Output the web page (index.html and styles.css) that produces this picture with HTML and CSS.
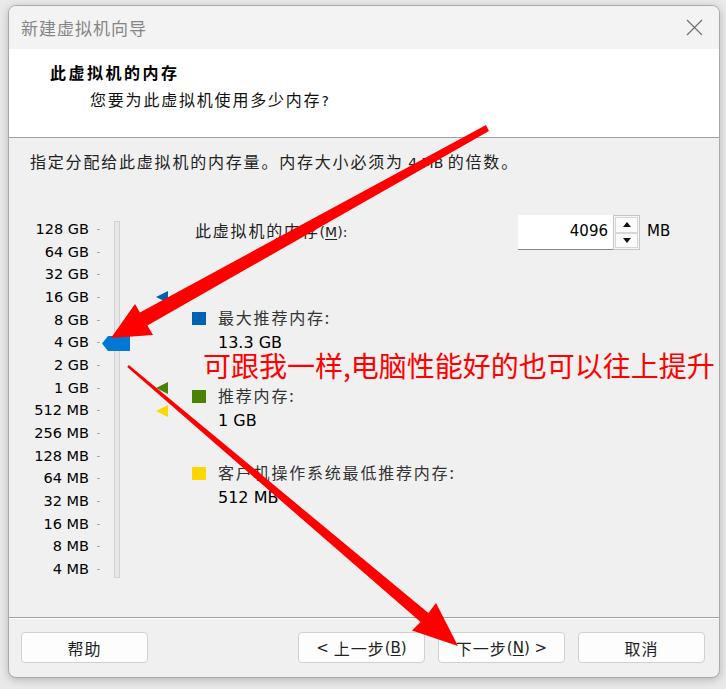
FILE: index.html
```html
<html>

<head>
  <meta charset="utf-8">
  <link rel="stylesheet" href="styles.css">
</head>

<body>
  <div class="win">
    <div class="titlebar">
      <span class="title">新建虚拟机向导</span>
      <svg class="close" width="17" height="17" viewBox="0 0 17 17">
        <path d="M1 1L16 16M16 1L1 16" stroke="#6e6e6e" stroke-width="1.2" fill="none" />
      </svg>
    </div>
    <div class="header">
      <div class="head-title">此虚拟机的内存</div>
      <div class="head-sub"><span class="cn">您要为此虚拟机使用多少内存</span>?</div>
    </div>
    <div class="content">
      <p class="desc"><span class="cn">指定分配给此虚拟机的内存量。内存大小必须为</span> 4 MB <span class="cn">的倍数。</span></p>
      <div class="mem">
        <div class="scale">
          <div class="labels">
            <div>128 GB</div><div>64 GB</div><div>32 GB</div><div>16 GB</div>
            <div>8 GB</div><div>4 GB</div><div>2 GB</div><div>1 GB</div>
            <div>512 MB</div><div>256 MB</div><div>128 MB</div><div>64 MB</div>
            <div>32 MB</div><div>16 MB</div><div>8 MB</div><div>4 MB</div>
          </div>
          <div class="ticks">
            <i></i><i></i><i></i><i></i><i></i><i></i><i></i><i></i>
            <i></i><i></i><i></i><i></i><i></i><i></i><i></i><i></i>
          </div>
          <div class="track"></div>
          <div class="marks">
            <i></i><i></i><i></i><i class="max"></i><i></i><i></i><i></i><i class="rec"></i>
            <i class="min"></i><i></i><i></i><i></i><i></i><i></i><i></i><i></i>
          </div>
          <div class="thumb"></div>
        </div>
        <div class="panel">
          <div class="mem-row">
            <span class="mem-label"><span class="cn">此虚拟机的内存</span>(<u>M</u>):</span>
            <div class="spin">
              <div class="spin-val">4096</div>
              <div class="spin-btns">
                <b><em class="up"></em></b>
                <b><em class="down"></em></b>
              </div>
            </div>
            <span class="unit">MB</span>
          </div>
          <div class="legend">
            <div class="item">
              <span class="sq max"></span>
              <div>
                <div class="cn lbl">最大推荐内存:</div>
                <div class="val">13.3 GB</div>
              </div>
            </div>
            <div class="item">
              <span class="sq rec"></span>
              <div>
                <div class="cn lbl">推荐内存:</div>
                <div class="val">1 GB</div>
              </div>
            </div>
            <div class="item last">
              <span class="sq min"></span>
              <div>
                <div class="cn lbl">客户机操作系统最低推荐内存:</div>
                <div class="val">512 MB</div>
              </div>
            </div>
          </div>
        </div>
      </div>
    </div>
    <div class="footer">
      <a class="btn"><span class="cn">帮助</span></a>
      <a class="btn push">&lt;&nbsp;<span class="cn">上一步</span>(<u>B</u>)</a>
      <a class="btn"><span class="cn">下一步</span>(<u>N</u>)&nbsp;&gt;</a>
      <a class="btn"><span class="cn">取消</span></a>
    </div>
  </div>

  <div class="note">可跟我一样,电脑性能好的也可以往上提升</div>

  <svg class="arrows" width="726" height="689" viewBox="0 0 726 689">
    <polygon fill="#ff0000" points="486,125 139.9,312.4 135,304 111,338 153,335 147.4,325.4 489,131" />
    <polygon fill="#ff0000" points="128.8,365 428.4,612.9 436,603 458,646 412,630.5 420.6,622.1 127.2,367" />
  </svg>
</body>

</html>
```

FILE: styles.css
```css
html,
body {
  margin: 0;
  padding: 0;
}

body {
  position: relative;
  box-sizing: border-box;
  width: 726px;
  height: 689px;
  padding: 5px 0 0 8px;
  overflow: hidden;
  background: #e9e9e9;
  font-family: "DejaVu Sans", "Noto Sans CJK SC", sans-serif;
  font-size: 14px;
  color: #000;
}

.cn {
  font-family: "Noto Sans CJK SC", sans-serif;
  font-size: 16px;
  letter-spacing: 1.8px;
}

u {
  text-decoration: underline;
  text-underline-offset: 2px;
}

.win {
  box-sizing: border-box;
  width: 712px;
  height: 673px;
  border: 1px solid #a9a9a9;
  border-radius: 8px;
  overflow: hidden;
  background: #f0f0f0;
  box-shadow: 0 2px 8px rgba(0, 0, 0, .22);
}

.titlebar {
  display: flex;
  align-items: center;
  height: 43px;
  padding-left: 12px;
  background: #f3f3f3;
}

.title {
  font-family: "Noto Sans CJK SC", sans-serif;
  font-size: 17px;
  letter-spacing: 1px;
  color: #858585;
}

.close {
  margin-left: auto;
  margin-right: 16px;
}

.header {
  height: 88px;
  box-sizing: content-box;
  padding: 0 0 0 41px;
  background: #fff;
  border-bottom: 1px solid #a0a0a0;
}

.head-title {
  padding-top: 13px;
  line-height: 20px;
  font-family: "Noto Sans CJK SC", sans-serif;
  font-size: 16px;
  font-weight: bold;
  letter-spacing: 2.5px;
}

.head-sub {
  margin-top: 7px;
  padding-left: 40px;
  line-height: 20px;
  color: #111;
}

.content {
  height: 479px;
  padding-top: 13px;
  box-sizing: border-box;
}

.desc {
  margin: 0;
  padding-left: 21px;
  line-height: 20px;
  color: #222;
  white-space: nowrap;
}

.mem {
  display: flex;
  margin-top: 42px;
}

.scale {
  position: relative;
  display: flex;
  align-items: flex-start;
  padding-top: 3.17px;
}

.labels {
  width: 80px;
  text-align: right;
  font-size: 14.5px;
}

.labels div {
  height: 22.667px;
  line-height: 22.667px;
  white-space: nowrap;
}

.ticks {
  width: 3px;
  margin-left: 8px;
}

.ticks i {
  display: flex;
  align-items: center;
  height: 22.667px;
}

.ticks i::before {
  content: "";
  width: 3px;
  height: 1px;
  background: #a8a8a8;
}

.track {
  box-sizing: border-box;
  width: 6px;
  height: 357px;
  margin-top: 2.83px;
  margin-left: 14px;
  background: #e7e7e7;
  border: 1px solid #d2d2d2;
}

.marks {
  width: 13px;
  margin-left: 35px;
}

.marks i {
  display: flex;
  align-items: center;
  height: 22.667px;
}

.marks i.max::before,
.marks i.rec::before,
.marks i.min::before {
  content: "";
  margin-left: 1px;
  border-top: 6.5px solid transparent;
  border-bottom: 6.5px solid transparent;
  border-right: 12px solid #0063b1;
}

.marks i.rec::before {
  border-right-color: #498205;
}

.marks i.min::before {
  border-right-color: #fcd800;
}

.thumb {
  position: absolute;
  left: 93px;
  top: 121px;
  width: 28px;
  height: 15px;
  background: #0078d4;
  clip-path: polygon(6px 0, 100% 0, 100% 100%, 6px 100%, 0 50%);
}

.panel {
  display: flex;
  flex-direction: column;
  margin-left: 24px;
}

.mem-row {
  display: flex;
  align-items: center;
  height: 35px;
}

.mem-label {
  width: 323px;
  padding: 0 0 5px 3px;
  color: #222;
  white-space: nowrap;
}

.spin {
  display: flex;
  height: 35px;
}

.spin-val {
  box-sizing: border-box;
  width: 95px;
  height: 35px;
  padding-right: 5px;
  background: #fff;
  border-bottom: 1px solid #868686;
  text-align: right;
  line-height: 32px;
  font-size: 15px;
}

.spin-btns {
  box-sizing: border-box;
  display: flex;
  flex-direction: column;
  width: 27px;
  height: 35px;
  padding: 1px;
  border: 1px solid #c5c5c5;
  background: #f6f6f6;
}

.spin-btns b {
  box-sizing: border-box;
  flex: 1;
  display: flex;
  align-items: center;
  justify-content: center;
  border: 1px solid #d6d6d6;
  background: #fbfbfb;
}

.spin-btns em {
  width: 0;
  height: 0;
  border-left: 4.5px solid transparent;
  border-right: 4.5px solid transparent;
}

.spin-btns em.up {
  border-bottom: 5px solid #111;
}

.spin-btns em.down {
  border-top: 5px solid #111;
}

.unit {
  margin-left: 7px;
  padding-bottom: 3px;
  font-size: 15px;
}

.legend {
  display: flex;
  flex-direction: column;
  gap: 28px;
  margin-top: 55px;
}

.item {
  display: flex;
  align-items: flex-start;
}

.item.last {
  margin-top: -1px;
}

.sq {
  width: 14px;
  height: 13px;
  margin-top: 7px;
  margin-right: 12px;
  background: #0063b1;
}

.sq.rec {
  background: #498205;
}

.sq.min {
  background: #fcd800;
}

.lbl {
  line-height: 24px;
  color: #333;
  white-space: nowrap;
}

.val {
  padding-top: 2px;
  line-height: 24px;
  font-size: 16px;
}

.footer {
  display: flex;
  gap: 13px;
  padding: 14px 14px 0 12px;
  box-sizing: border-box;
  height: 60px;
  border-top: 1px solid #a0a0a0;
  box-shadow: inset 0 1px #fff;
}

.btn {
  box-sizing: border-box;
  display: flex;
  align-items: center;
  justify-content: center;
  width: 127px;
  height: 31px;
  background: #fdfdfd;
  border: 1px solid #d0d0d0;
  border-radius: 4px;
  color: #222;
  font-size: 15px;
  white-space: nowrap;
}

.btn .cn {
  letter-spacing: 1px;
}

.btn.push {
  margin-left: auto;
}

.note {
  position: absolute;
  left: 203px;
  top: 351px;
  line-height: 28px;
  font-family: "Noto Sans CJK SC", sans-serif;
  font-size: 28px;
  color: #ff0000;
  white-space: nowrap;
}

.arrows {
  position: absolute;
  left: 0;
  top: 0;
  pointer-events: none;
}
```
